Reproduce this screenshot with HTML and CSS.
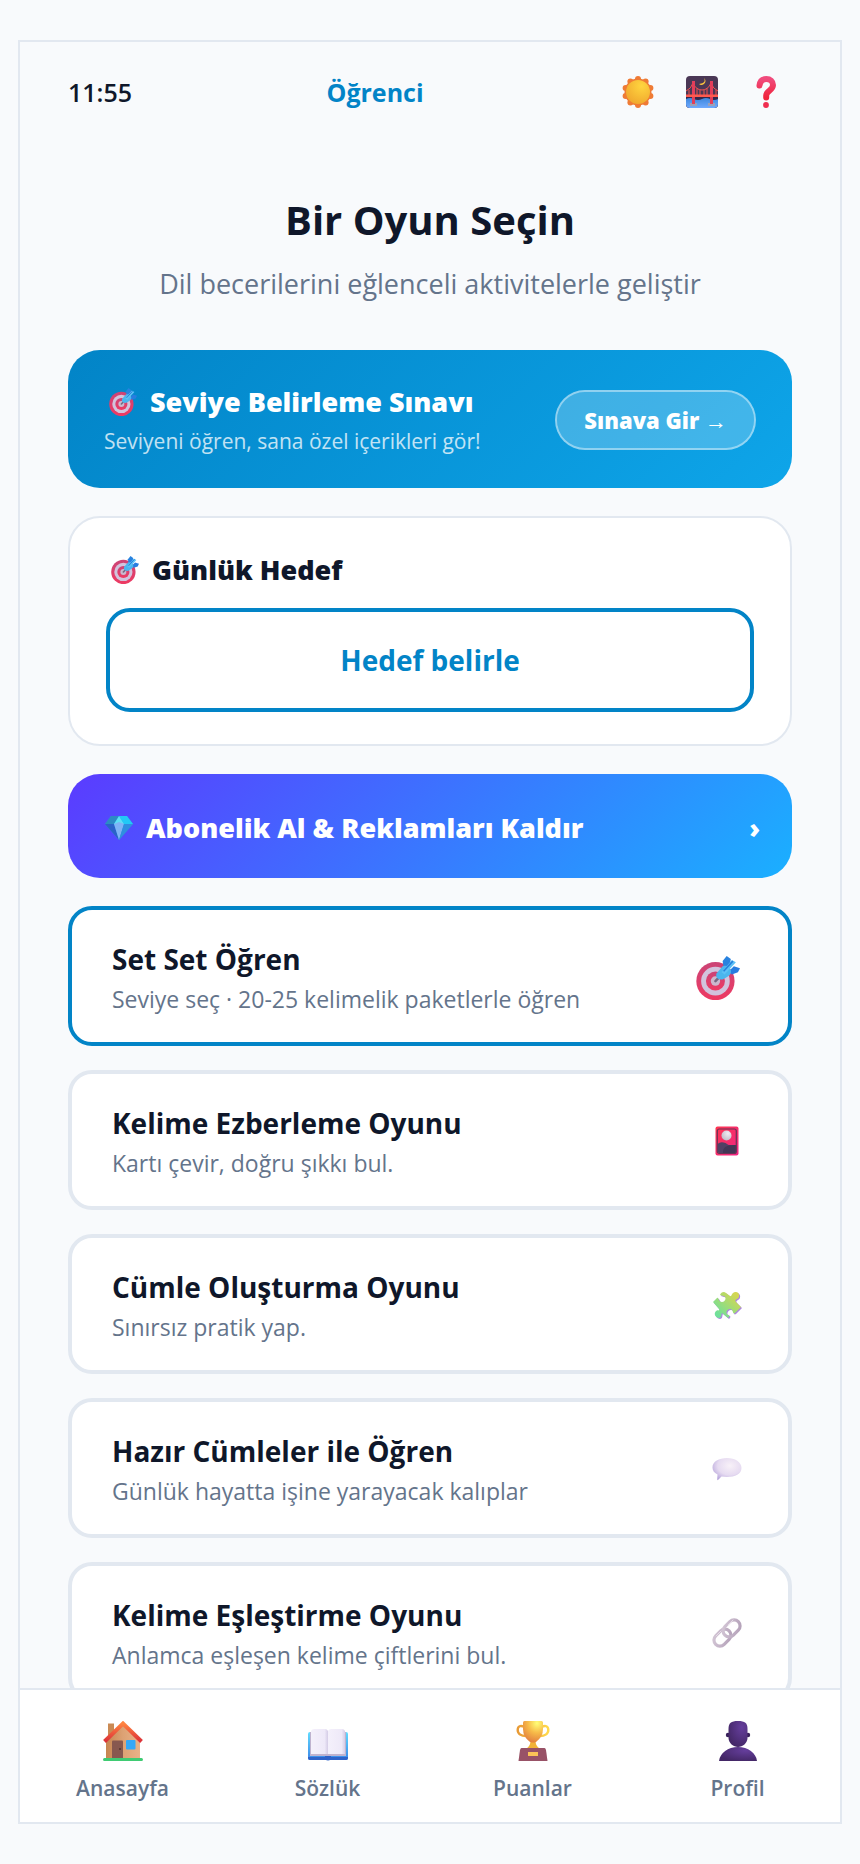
FILE: index.html
```html
<!DOCTYPE html>
<html lang="tr">
<head>
<meta charset="utf-8">
<meta name="viewport" content="width=device-width, initial-scale=1">
<title>Bir Oyun Seçin</title>
<link rel="stylesheet" href="styles.css">
</head>
<body>
<svg class="sprite" aria-hidden="true">
  <defs>
    <linearGradient id="g-ring" x1="0" y1="0" x2="0" y2="1"><stop offset="0" stop-color="#cb4476"/><stop offset="1" stop-color="#ee3a62"/></linearGradient>
    <linearGradient id="g-puzzle" x1="0" y1="1" x2="1" y2="0"><stop offset="0.15" stop-color="#70e09a"/><stop offset="0.85" stop-color="#d3d752"/></linearGradient>
    <radialGradient id="g-bubble" cx="0.6" cy="0.35" r="0.7"><stop offset="0" stop-color="#f8f1f8"/><stop offset="0.6" stop-color="#e6dbf1"/><stop offset="1" stop-color="#b9a8dc"/></radialGradient>
    <linearGradient id="g-roof" x1="0" y1="0" x2="0" y2="1"><stop offset="0" stop-color="#ff8440"/><stop offset="1" stop-color="#dc3038"/></linearGradient>
    <linearGradient id="g-wall" x1="0" y1="0" x2="1" y2="0"><stop offset="0" stop-color="#c68550"/><stop offset="0.5" stop-color="#dda274"/><stop offset="1" stop-color="#e8b288"/></linearGradient>
    <linearGradient id="g-page" x1="0" y1="0" x2="1" y2="0"><stop offset="0" stop-color="#f4f0fb"/><stop offset="0.8" stop-color="#eee9f8"/><stop offset="1" stop-color="#d4cce6"/></linearGradient>
    <linearGradient id="g-cover" x1="0" y1="0" x2="0" y2="1"><stop offset="0" stop-color="#62dcff"/><stop offset="1" stop-color="#3a86e8"/></linearGradient>
    <radialGradient id="g-cup" cx="0.7" cy="0.1" r="0.9"><stop offset="0" stop-color="#ffff77"/><stop offset="0.5" stop-color="#f7bb49"/><stop offset="1" stop-color="#e48340"/></radialGradient>
    <linearGradient id="g-handle" x1="0" y1="0" x2="1" y2="0"><stop offset="0" stop-color="#e89a35"/><stop offset="1" stop-color="#ffd94c"/></linearGradient>
    <radialGradient id="g-person" cx="0.7" cy="0.25" r="0.8"><stop offset="0" stop-color="#653e9c"/><stop offset="1" stop-color="#432766"/></radialGradient>
    <radialGradient id="g-sun" cx="0.65" cy="0.25" r="0.8"><stop offset="0" stop-color="#ffd53f"/><stop offset="1" stop-color="#f0a82e"/></radialGradient>
    <linearGradient id="g-question" x1="0" y1="0" x2="0" y2="1"><stop offset="0" stop-color="#f04b7c"/><stop offset="1" stop-color="#f0243c"/></linearGradient>
    <linearGradient id="g-card" x1="0" y1="0" x2="1" y2="1"><stop offset="0" stop-color="#ff3650"/><stop offset="1" stop-color="#ee2585"/></linearGradient>
    <linearGradient id="g-link" x1="0" y1="0" x2="1" y2="1"><stop offset="0" stop-color="#d4c7d6"/><stop offset="1" stop-color="#b3a0b8"/></linearGradient>
    <radialGradient id="g-moon" cx="0.65" cy="0.3" r="0.7"><stop offset="0" stop-color="#f2eaf2"/><stop offset="1" stop-color="#c5bfca"/></radialGradient>
    <linearGradient id="g-sea" x1="0" y1="0" x2="0" y2="1"><stop offset="0" stop-color="#3d86dc"/><stop offset="1" stop-color="#70aaff"/></linearGradient>
  </defs>
  <symbol id="target" viewBox="0 0 43 43">
    <circle cx="19" cy="24.500" r="18.700" fill="url(#g-ring)"/>
    <circle cx="19" cy="24.500" r="14" fill="#d2c3dc"/>
    <circle cx="19" cy="24.500" r="9.300" fill="url(#g-ring)"/>
    <circle cx="19" cy="24.500" r="4.600" fill="#cbb9ce"/>
    <path d="M19 24.500 29 14" stroke="#756a82" stroke-width="2.500" stroke-linecap="round"/>
    <path d="M27 11 26 5 30 0 34 3 33 10Z" fill="#2882df"/>
    <path d="M32 15 37 10 43 12 41 16 35 18Z" fill="#287de0"/>
    <path d="m20 17 6-7c4-1 7 0 8 4s-2 6-8 9c-5 0-7-2-6-6Z" fill="#4bb6ee"/>
    <path d="m25 16 10-12 4 2-11 12Z" fill="#5dc1f5"/>
    <path d="m27 15 9-10" stroke="#267fda" stroke-width="1.500"/>
  </symbol>
  <symbol id="sun" viewBox="0 0 32 32">
    <g fill="#ef7b35"><circle cx="16" cy="16" r="13.500"/><circle cx="16" cy="3" r="3"/><circle cx="23.600" cy="5.500" r="3"/><circle cx="28.400" cy="12" r="3"/><circle cx="28.400" cy="20" r="3"/><circle cx="23.600" cy="26.500" r="3"/><circle cx="16" cy="29" r="3"/><circle cx="8.400" cy="26.500" r="3"/><circle cx="3.600" cy="20" r="3"/><circle cx="3.600" cy="12" r="3"/><circle cx="8.400" cy="5.500" r="3"/></g>
    <circle cx="16" cy="16" r="12" fill="url(#g-sun)"/>
  </symbol>
  <symbol id="bridge" viewBox="0 0 32 32">
    <rect width="32" height="32" rx="4" fill="#4a3755"/>
    <path d="M0 20h32v8a4 4 0 0 1-4 4H4a4 4 0 0 1-4-4Z" fill="#35284c"/>
    <path d="M0 23q4-2 8 0t8 0 8 0 8 0v5a4 4 0 0 1-4 4H4a4 4 0 0 1-4-4Z" fill="url(#g-sea)"/>
    <path d="M18 2q3 5-5 6 2 2 5 0 3-3 0-6Z" fill="#ffc83c"/>
    <path d="M4 27h7v3H4ZM22 27h7v3h-7Z" fill="#9aa0b8"/>
    <g fill="none" stroke="#ef5350" stroke-width="1"><path d="M0 15q5-2 7-8 3 7 9 7t9-7q2 6 7 8M3 14v5M11 12v7M14 14v5M18 14v5M21 12v7M30 14v5"/></g>
    <path d="M6 5h3v23H6ZM24 5h3v23h-3Z" fill="#e23e5a"/>
    <path d="M0 18.500h32v2.500H0Z" fill="#ff5a4e"/>
  </symbol>
  <symbol id="question" viewBox="0 0 20 32">
    <path d="M3.500 9.500C4 5 6.500 3 10.300 3c4 0 6.700 2.500 6.700 6 0 5.500-6.800 5.500-6.800 10.500v2" fill="none" stroke="url(#g-question)" stroke-width="6" stroke-linecap="round"/>
    <circle cx="10" cy="29" r="2.900" fill="#f02d4f"/>
  </symbol>
  <symbol id="gem" viewBox="0 0 28 24">
    <path d="m0 8 6-8h16l6 8-14 16Z" fill="#2e8fdf"/>
    <path d="m6 0 8 0-5 8H0Z" fill="#2c8bc4"/><path d="m14 0h8l6 8h-9Z" fill="#22c9f6"/><path d="m14 0 5 8-5 2-5-2Z" fill="#5ce0f5"/>
    <path d="m0 8h9l5 16Z" fill="#2a62c8"/><path d="m9 8 5-2 5 2-5 16Z" fill="#7fb3f6"/><path d="m19 8h9L14 24Z" fill="#2f8fe0"/>
  </symbol>
  <symbol id="hanafuda" viewBox="0 0 24 30">
    <rect x="0.500" y="0.500" width="23" height="29" rx="2" fill="url(#g-card)"/>
    <path d="M2.500 18q3-3 8-1l3 2 8 0v6a2 2 0 0 1-2 2h-15a2 2 0 0 1-2-2Z" fill="#514064"/>
    <path d="M8 27q-1-9 13.500-8v6a2 2 0 0 1-2 2Z" fill="#433656"/>
    <rect x="2.300" y="3" width="19" height="24.500" rx="2" fill="none" stroke="#693455" stroke-width="1.200"/>
    <circle cx="11.500" cy="9.500" r="5" fill="url(#g-moon)"/>
  </symbol>
  <symbol id="puzzle" viewBox="0 0 30 30">
    <path d="M8 5c1-3 4-4 6-2l4 3c2 1 1-3 5-4s6 5 2 7c-2 1-2 2-1 3l5 5-6 6c-3 2-1-4-5-4s-5 6-1 6c1 1 0 2-1 3l-6-5c-1 1 0 5-3 5s-6-4-3-7c1-1 4 0 3-2L1 12l4-4c2-1 1 4 5 4s5-6 1-6Z" fill="#ad86e0" transform="translate(1 1)"/>
    <path d="M8 5c1-3 4-4 6-2l4 3c2 1 1-3 5-4s6 5 2 7c-2 1-2 2-1 3l5 5-6 6c-3 2-1-4-5-4s-5 6-1 6c1 1 0 2-1 3l-6-5c-1 1 0 5-3 5s-6-4-3-7c1-1 4 0 3-2L1 12l4-4c2-1 1 4 5 4s5-6 1-6Z" fill="url(#g-puzzle)"/>
  </symbol>
  <symbol id="bubble" viewBox="0 0 30 23">
    <path d="M15 .5c8 0 14.500 4 14.500 10S23 19.500 15 19.500c-2 0-4-.2-5.500-.5L6 22.500q-1 .5-.8-1L5.500 17C2 15 .5 13 .5 10 .5 4 7 .5 15 .5Z" fill="url(#g-bubble)"/>
  </symbol>
  <symbol id="link" viewBox="0 0 30 30">
    <g fill="none" stroke="url(#g-link)" stroke-width="3.200" transform="rotate(-45 15 15)"><rect x="-1" y="9" width="19" height="12" rx="6"/><rect x="12" y="9" width="19" height="12" rx="6"/></g>
    <path d="M4 18 9 13M16 7l5-5" stroke="#e6dbe7" stroke-width="1" stroke-linecap="round"/>
  </symbol>
  <symbol id="home" viewBox="0 0 40 40">
    <path d="M5 2.500h6V16H5Z" fill="#ca8a54"/>
    <path d="M3 19 20 3l17 16v18H3Z" fill="url(#g-wall)"/>
    <rect y="37" width="40" height="3" rx="1.500" fill="#3fcb73"/>
    <path d="M9 20.500a1 1 0 0 1 1-1h9a1 1 0 0 1 1 1V37H9Z" fill="#87584f"/><circle cx="17" cy="28" r="1" fill="#53332e"/>
    <rect x="23" y="19" width="9.500" height="9.500" rx="1" fill="#34a8f8"/>
    <path d="M1.500 20.500 20 2.500l18.500 18" fill="none" stroke="url(#g-roof)" stroke-width="4"/>
  </symbol>
  <symbol id="book" viewBox="0 0 40 32">
    <rect y="3" width="40" height="28" rx="2" fill="url(#g-cover)"/>
    <path d="M0 28h40v1a2 2 0 0 1-2 2H2a2 2 0 0 1-2-2Z" fill="#2f63c9"/>
    <path d="M2 3h36v24H2Z" fill="#bfb3cf"/>
    <path d="M3 2q1-2 3-2h11q2 0 3 2v23H3Z" fill="url(#g-page)"/><path d="M20 2q1-2 3-2h11q2 0 3 2v23H20Z" fill="url(#g-page)"/>
    <path d="M17 27h6v3q-3 3-6 0Z" fill="#2f63c9"/>
  </symbol>
  <symbol id="trophy" viewBox="0 0 33 40">
    <path d="M8 6C4 4 1.200 5 1.200 9s4 6 8 6M25 6c4-2 6.800-1 6.800 3s-4 6-8 6" fill="none" stroke="url(#g-handle)" stroke-width="2.400"/>
    <path d="M14 20h5q0 5 4 7.500H10q4-2.500 4-7.500Z" fill="#f2b338"/>
    <path d="M6.500 1.500Q6.500 0 8 0h17q1.500 0 1.500 1.500V8q0 8-7 13-3 1-6 0-7-5-7-13Z" fill="url(#g-cup)"/>
    <path d="M5 27h23q1 0 1.500 2L31 40H2l1.500-11Q4 27 5 27Z" fill="#985267"/>
    <rect x="11.500" y="31" width="10" height="4" fill="#fbc357"/>
  </symbol>
  <symbol id="person" viewBox="0 0 38 40">
    <circle cx="9" cy="14" r="2.200" fill="#38205a"/><circle cx="29" cy="14" r="2.200" fill="#38205a"/>
    <path d="M9.500 8C9.500 2 12 0 19 0s9.500 2 9.500 8v9c0 5-5 9-9.500 9s-9.500-4-9.500-9Z" fill="url(#g-person)"/>
    <path d="M0 40c1-8 9-14 19-14s18 6 19 14Z" fill="url(#g-person)"/>
  </symbol>
</svg>

<div class="phone">
  <header class="topbar">
    <time class="clock">11:55</time>
    <span class="role">Öğrenci</span>
    <div class="tools">
      <button class="tool" type="button" aria-label="Tema"><svg class="icon-md"><use href="#sun"/></svg></button>
      <button class="tool" type="button" aria-label="Arka plan"><svg class="icon-md"><use href="#bridge"/></svg></button>
      <button class="tool" type="button" aria-label="Yardım"><svg class="icon-md"><use href="#question"/></svg></button>
    </div>
  </header>

  <main class="content">
    <div class="intro">
      <h1 class="title">Bir Oyun Seçin</h1>
      <p class="lead">Dil becerilerini eğlenceli aktivitelerle geliştir</p>
    </div>

    <section class="exam">
      <div class="exam-text">
        <h2 class="heading"><svg class="icon-sm"><use href="#target"/></svg>Seviye Belirleme Sınavı</h2>
        <p class="exam-note">Seviyeni öğren, sana özel içerikleri gör!</p>
      </div>
      <button class="exam-button" type="button">Sınava Gir →</button>
    </section>

    <section class="goal">
      <h2 class="heading"><svg class="icon-sm"><use href="#target"/></svg>Günlük Hedef</h2>
      <button class="goal-button" type="button">Hedef belirle</button>
    </section>

    <button class="premium" type="button">
      <span class="heading"><svg class="icon-sm"><use href="#gem"/></svg>Abonelik Al &amp; Reklamları Kaldır</span>
      <span class="chevron">›</span>
    </button>

    <div class="games">
      <button class="game game-active" type="button">
        <span class="game-text"><span class="game-title">Set Set Öğren</span><span class="game-note">Seviye seç · 20-25 kelimelik paketlerle öğren</span></span>
        <svg class="icon-lg"><use href="#target"/></svg>
      </button>
      <button class="game" type="button">
        <span class="game-text"><span class="game-title">Kelime Ezberleme Oyunu</span><span class="game-note">Kartı çevir, doğru şıkkı bul.</span></span>
        <svg class="icon-game"><use href="#hanafuda"/></svg>
      </button>
      <button class="game" type="button">
        <span class="game-text"><span class="game-title">Cümle Oluşturma Oyunu</span><span class="game-note">Sınırsız pratik yap.</span></span>
        <svg class="icon-game"><use href="#puzzle"/></svg>
      </button>
      <button class="game" type="button">
        <span class="game-text"><span class="game-title">Hazır Cümleler ile Öğren</span><span class="game-note">Günlük hayatta işine yarayacak kalıplar</span></span>
        <svg class="icon-game"><use href="#bubble"/></svg>
      </button>
      <button class="game" type="button">
        <span class="game-text"><span class="game-title">Kelime Eşleştirme Oyunu</span><span class="game-note">Anlamca eşleşen kelime çiftlerini bul.</span></span>
        <svg class="icon-game"><use href="#link"/></svg>
      </button>
    </div>
  </main>

  <nav class="tabs">
    <a class="tab" href="#anasayfa"><svg class="icon-tab"><use href="#home"/></svg>Anasayfa</a>
    <a class="tab" href="#sozluk"><svg class="icon-tab icon-book"><use href="#book"/></svg>Sözlük</a>
    <a class="tab" href="#puanlar"><svg class="icon-tab"><use href="#trophy"/></svg>Puanlar</a>
    <a class="tab" href="#profil"><svg class="icon-tab"><use href="#person"/></svg>Profil</a>
  </nav>
</div>
</body>
</html>
```

FILE: styles.css
```css
* {
  box-sizing: border-box;
}

body {
  margin: 0;
  padding: 40px 18px;
  background: #f8fafc;
  color: #0f172a;
  font-family: "Open Sans", "Noto Sans", sans-serif;
}

h1,
h2,
p {
  margin: 0;
}

button {
  font-family: inherit;
  cursor: pointer;
}

svg {
  flex: none;
}

.sprite {
  position: absolute;
  width: 0;
  height: 0;
}

.phone {
  display: flex;
  flex-direction: column;
  height: calc(100vh - 80px);
  border: 2px solid #e2e8f0;
}

.topbar {
  display: flex;
  align-items: center;
  justify-content: space-between;
  padding: 30px 48px 34px;
  line-height: 40px;
}

.clock {
  font-size: 25px;
  font-weight: 600;
}

.role {
  color: #0284c7;
  font-size: 25px;
  font-weight: 700;
}

.tools {
  display: flex;
  gap: 32px;
  padding: 0 10px 0 4px;
}

.tool {
  display: flex;
  padding: 0;
  border: 0;
  background: none;
}

.icon-md {
  width: 32px;
  height: 32px;
}

.icon-sm {
  width: 28px;
  height: 28px;
}

.icon-lg {
  width: 44px;
  height: 44px;
  margin-top: 4px;
}

.icon-game {
  width: 30px;
  height: 30px;
  margin-top: 2px;
}

.icon-tab {
  width: 40px;
  height: 40px;
}

.icon-book {
  padding-top: 8px;
}

.content {
  flex: 1;
  min-height: 0;
  overflow-y: auto;
  scrollbar-width: none;
  padding: 44px 48px 24px;
}

.intro {
  margin-bottom: 46px;
  text-align: center;
}

.title {
  margin-bottom: 14px;
  font-size: 40px;
  font-weight: 700;
  line-height: 60px;
}

.lead {
  color: #64748b;
  font-size: 27px;
  line-height: 40px;
}

.heading {
  display: flex;
  align-items: center;
  gap: 13px;
  padding-left: 5px;
  font-size: 27px;
  font-weight: 800;
  line-height: 36px;
}

.exam {
  display: flex;
  align-items: center;
  justify-content: space-between;
  margin-bottom: 28px;
  padding: 34px 36px 32px;
  border-radius: 32px;
  background: linear-gradient(135deg, #0284c7, #0ea5e9);
  color: #fff;
}

.exam-text {
  display: grid;
  gap: 6px;
}

.exam-note {
  font-size: 21px;
  line-height: 30px;
  opacity: 0.75;
}

.exam-button {
  height: 60px;
  padding: 0 27px;
  border: 2px solid rgba(255, 255, 255, 0.55);
  border-radius: 30px;
  background: rgba(255, 255, 255, 0.22);
  background-clip: padding-box;
  color: #fff;
  font-size: 22px;
  font-weight: 800;
}

.goal {
  margin-bottom: 28px;
  padding: 34px 36px 32px;
  border: 2px solid #e2e8f0;
  border-radius: 32px;
  background: #fff;
}

.goal-button {
  width: 100%;
  height: 104px;
  margin-top: 20px;
  border: 4px solid #0284c7;
  border-radius: 24px;
  background: #fff;
  color: #0284c7;
  font-size: 28px;
  font-weight: 700;
}

.premium {
  display: flex;
  align-items: center;
  justify-content: space-between;
  width: 100%;
  margin-bottom: 28px;
  padding: 36px 32px 32px;
  border: 0;
  border-radius: 32px;
  background: linear-gradient(135deg, #5b3bff, #1ab0ff);
  color: #fff;
}

.chevron {
  font-size: 27px;
  font-weight: 800;
  line-height: 36px;
}

.games {
  display: grid;
  gap: 24px;
}

.game {
  display: flex;
  align-items: center;
  justify-content: space-between;
  height: 140px;
  padding: 0 46px 0 40px;
  border: 4px solid #e2e8f0;
  border-radius: 24px;
  background: #fff;
  color: #0f172a;
  text-align: left;
}

.game-active {
  padding-right: 48px;
  border-color: #0284c7;
}

.game-text {
  display: grid;
  gap: 4px;
  padding-top: 2px;
}

.game-title {
  font-size: 28px;
  font-weight: 700;
  line-height: 40px;
}

.game-note {
  color: #64748b;
  font-size: 23px;
  line-height: 32px;
}

.tabs {
  display: grid;
  grid-template-columns: repeat(4, 1fr);
  padding: 31px 0 19px;
  border-top: 2px solid #e2e8f0;
  background: #fff;
}

.tab {
  display: grid;
  justify-items: center;
  gap: 12px;
  color: #64748b;
  font-size: 21px;
  font-weight: 600;
  line-height: 30px;
  text-decoration: none;
}
```
